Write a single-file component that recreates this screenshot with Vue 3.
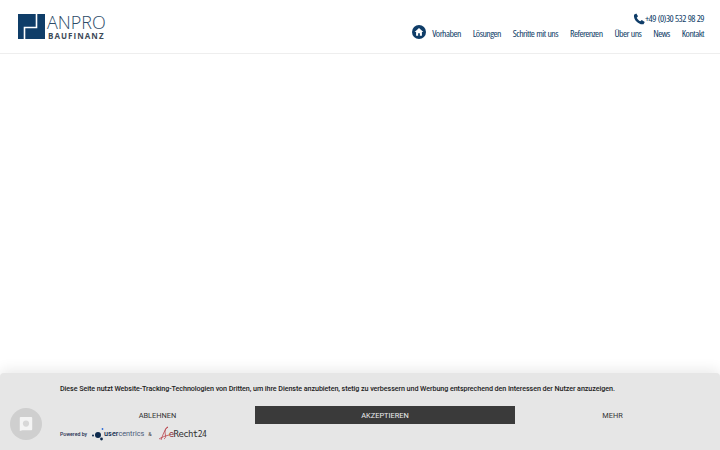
<template>
  <div class="page">
    <header class="site-header">
      <a class="logo">
        <svg class="logo-mark" width="27" height="25" viewBox="0 0 27 25">
          <rect width="27" height="25" fill="#0f3d68" />
          <path fill="none" stroke="#fff" stroke-width="1.600" d="M18.500 0V13.500H6.500V25" />
        </svg>
        <div class="logo-text">
          <div class="logo-name">ANPRO</div>
          <div class="logo-sub">BAUFINANZ</div>
        </div>
      </a>
      <div class="header-right">
        <div class="phone">
          <svg width="11" height="11" viewBox="0 0 24 24"><path fill="#0f3d68" d="M6.600 1 2 3.500C1 9 4 14.500 7.500 17.500 11 21 16 23.500 21 22.500L23.500 18 17.500 14 14.500 16.500C12 15.500 8.500 12 7.500 9.500L10 6.500Z" /></svg>
          <span class="cond">+49 (0)30 532 98 29</span>
        </div>
        <nav class="main-nav">
          <svg class="home" width="14" height="14" viewBox="0 0 24 24">
            <circle cx="12" cy="12" r="12" fill="#0f3d68" />
            <path fill="#fff" d="M12 5 4.500 12H7V18.500H10.500V14H13.500V18.500H17V12H19.500Z" />
          </svg>
          <a v-for="item in navItems" :key="item" class="nav-item"><span class="cond">{{ item }}</span></a>
        </nav>
      </div>
    </header>

    <main class="content"></main>

    <section class="consent">
      <p class="consent-text">Diese Seite nutzt Website-Tracking-Technologien von Dritten, um ihre Dienste anzubieten, stetig zu verbessern und Werbung entsprechend den Interessen der Nutzer anzuzeigen.</p>
      <div class="consent-row">
        <div class="side">
          <button class="btn">ABLEHNEN</button>
          <div class="powered">
            <span class="powered-by">Powered by</span>
            <svg class="uc-mark" width="12" height="14" viewBox="0 0 12 14">
              <circle cx="6" cy="8" r="3" fill="#0d2a4d" />
              <circle cx="1" cy="8.500" r="1" fill="#0d2a4d" />
              <circle cx="10.500" cy="2" r="0.900" fill="#2a6ad8" />
              <circle cx="9.500" cy="12" r="1.400" fill="#0d2a4d" />
            </svg>
            <span class="uc"><b>user</b>centrics</span>
            <span class="amp">&amp;</span>
            <svg class="er-mark" width="12" height="15" viewBox="0 0 12 15">
              <path fill="none" stroke="#b5303a" stroke-width="0.700" d="M1 13C4 11 7 10 11 9M3 14C5 9 6 4 10 1 8 1 7 3 7 6 7 9 9 11 6 13" />
            </svg>
            <span class="er"><i>e</i>Recht<small>24</small></span>
          </div>
        </div>
        <button class="btn btn-accept">AKZEPTIEREN</button>
        <div class="side-right"><button class="btn">MEHR</button></div>
      </div>
    </section>

    <div class="privacy-badge">
      <svg width="16" height="16" viewBox="0 0 18 18">
        <path fill="#f4f4f4" d="M3 1H15Q16 1 16 2V15Q16 16 15 16H5L2 17V2Q2 1 3 1Z" />
        <circle cx="9" cy="8.500" r="3.500" fill="#d8d8d8" />
      </svg>
    </div>
  </div>
</template>

<script setup>
const navItems = ['Vorhaben', 'Lösungen', 'Schritte mit uns', 'Referenzen', 'Über uns', 'News', 'Kontakt']
</script>

<style>
html, body { margin: 0; background: #fff; overflow: hidden; }
</style>

<style scoped>
.page { width: 720px; height: 450px; display: flex; flex-direction: column; position: relative; overflow: hidden; font-family: Roboto, "Liberation Sans", sans-serif; }
.site-header { height: 54px; flex: none; box-sizing: border-box; border-bottom: 1px solid #eee; padding: 0 16px 0 18px; display: flex; justify-content: space-between; }
.logo { display: flex; gap: 2px; padding-top: 14px; }
.logo-text { margin-top: -1px; }
.logo-name { font-family: "Open Sans", sans-serif; font-size: 18px; font-weight: 300; line-height: 18px; color: #2c4a68; }
.logo-sub { font-family: "Open Sans", sans-serif; font-size: 8px; font-weight: 700; letter-spacing: 1.050px; line-height: 10px; margin-left: 1px; color: #3d4a58; }
.header-right { display: flex; flex-direction: column; align-items: flex-end; padding-top: 12px; }
.phone { display: flex; align-items: center; gap: 0; height: 13px; }
.phone svg { width: 12px; height: 12px; }
.cond { font-family: "Open Sans", sans-serif; font-stretch: 75%; font-size: 9.800px; letter-spacing: -0.530px; word-spacing: 0.500px; color: #0f3d68; white-space: nowrap; }
.main-nav { display: flex; align-items: center; gap: 12px; height: 16px; margin-top: -2px; }
.home { margin-right: -6px; margin-top: 1px; }
.content { flex: 1; }
.consent { flex: none; height: 77px; background: #e6e6e6; border-radius: 4px 4px 0 0; box-shadow: 0 -3px 14px rgba(0, 0, 0, 0.09); box-sizing: border-box; padding-top: 10px; }
.consent-text { margin: 0 0 0 60px; font-size: 7.200px; font-weight: 500; letter-spacing: -0.085px; line-height: 12px; color: #222; white-space: nowrap; }
.consent-row { display: grid; grid-template-columns: 255px 260px 205px; margin-top: 11px; }
.side { display: flex; flex-direction: column; align-items: center; padding-left: 60px; box-sizing: border-box; }
.side-right { display: flex; justify-content: center; padding-right: 10px; }
.btn { border: 0; background: none; height: 18px; padding: 0; font-family: Roboto, sans-serif; font-size: 7.400px; color: #333; }
.btn-accept { background: #3a3a3a; color: #eee; }
.powered { display: flex; align-items: center; align-self: flex-start; height: 15px; margin-top: 2px; white-space: nowrap; }
.powered-by { font-size: 5.200px; font-weight: 500; color: #1d2d50; margin-right: 5px; }
.uc { font-size: 7.300px; color: #4a5a78; letter-spacing: 0; }
.uc b { font-weight: 500; color: #0d2a4d; }
.amp { font-size: 5.500px; color: #333; margin: 0 4px; }
.er-mark { flex: none; margin-left: 2px; margin-right: -1px; }
.er { font-family: "DejaVu Sans Mono", monospace; font-size: 9px; letter-spacing: -0.600px; color: #333; }
.er i { font-style: normal; color: #8a2a30; }
.er small { font-size: 8px; }
.privacy-badge { position: absolute; left: 10px; top: 408px; width: 32px; height: 32px; border-radius: 50%; background: #cfcfcf; display: flex; align-items: center; justify-content: center; }
</style>
